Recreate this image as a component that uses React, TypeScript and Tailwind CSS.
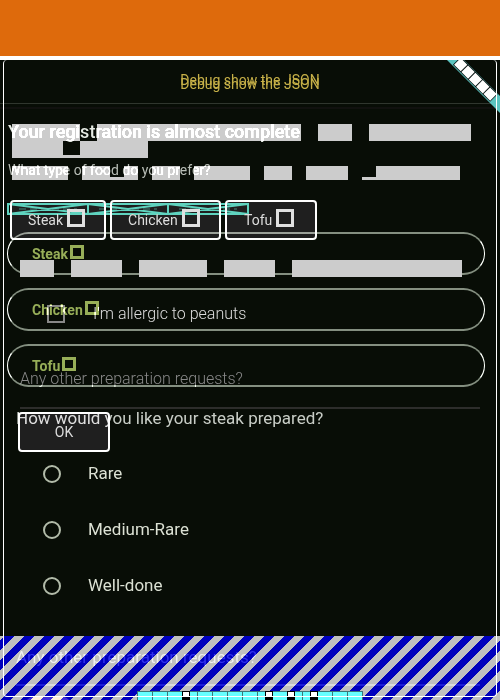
import React from "react";

const foods = ["Steak", "Chicken", "Tofu"];
const doneness = ["Rare", "Medium-Rare", "Well-done"];

function Block({ className }: { className: string }) {
  return <span className={`block h-full shrink-0 bg-[#ccc] ${className}`} />;
}

function BlockText() {
  return (
    <div aria-hidden="true" className="pointer-events-none absolute inset-x-0 top-[124px] overflow-hidden">
      <div className="flex h-[17px] gap-[17px] pl-3">
        <Block className="w-[68px]" />
        <Block className="w-[204px]" />
        <Block className="w-[34px]" />
        <Block className="w-[102px]" />
      </div>
      <div className="flex h-[17px] pl-3">
        <Block className="w-[51px]" />
        <span className="w-[17px] border-b-3 border-[#ccc]" />
        <Block className="w-[68px]" />
      </div>
      <div className="mt-2 flex h-3.5 gap-3.5 pl-3">
        <Block className="w-14" />
        <span className="flex">
          <Block className="w-7" />
          <span className="w-3.5 border-b-3 border-[#ccc]" />
          <Block className="w-3.5" />
        </span>
        <Block className="w-7" />
        <Block className="w-14" />
        <Block className="w-7" />
        <Block className="w-[42px]" />
        <span className="flex">
          <span className="w-3.5 border-b-3 border-[#ccc]" />
          <Block className="w-[84px]" />
        </span>
      </div>
    </div>
  );
}

function HintBlocks() {
  return (
    <div aria-hidden="true" className="pointer-events-none absolute inset-x-0 top-[260px] z-20 flex h-[17px] gap-[17px] overflow-hidden pl-5">
      <Block className="w-[34px]" />
      <Block className="w-[51px]" />
      <Block className="w-[68px]" />
      <Block className="w-[51px]" />
      <Block className="w-[170px]" />
    </div>
  );
}

function CrossedStrip() {
  return (
    <svg aria-hidden="true" width="242" height="12" viewBox="0 0 242 12" className="pointer-events-none absolute left-[7px] top-[203px] mix-blend-lighten" fill="none" stroke="#5fd3bf">
      <path d="M0 1H242M0 11H242" strokeWidth="2" />
      <path d="M1 0V12M81 0V12M161 0V12M241 0V12" strokeWidth="2" />
      <path d="M1 1L81 11M1 11L81 1M81 1L161 11M81 11L161 1M161 1L241 11M161 11L241 1" strokeWidth="2" />
      <path d="M12 6H70M92 6H150M172 6H230" strokeDasharray="7 4" strokeWidth="0.6" />
    </svg>
  );
}

function Ribbon() {
  return (
    <svg aria-hidden="true" width="54" height="54" viewBox="0 0 54 54" className="pointer-events-none absolute right-0 top-[60px]">
      <path d="M1 0H18L54 36V53Z" fill="#5cc4c0" />
      <g transform="translate(14.7 4.7) rotate(45)">
        <rect x="-5.5" y="-5.5" width="52.5" height="11" fill="#071211" />
        {[0, 10.4, 20.8, 31.2, 41.6].map((x) => (
          <rect key={x} x={x - 4.7} y="-4.7" width="9.4" height="9.4" fill="#fff" />
        ))}
      </g>
    </svg>
  );
}

function BottomStrip() {
  return (
    <svg aria-hidden="true" width="226" height="9" viewBox="0 0 226 9" className="pointer-events-none absolute bottom-0 left-1/2 z-10 -translate-x-[113px]">
      <rect width="226" height="9" fill="#66ffff" />
      <path d="M0 .5H226M.5 0V9M15.5 0V9M30.5 0V9M60.5 0V9M75.5 0V9M90.5 0V9M105.5 0V9M120.5 0V9M165.5 0V9M195.5 0V9M210.5 0V9M225.5 0V9" stroke="#3b7777" />
      {[46, 129, 151, 174].map((x) => (
        <g key={x}>
          <rect x={x - 1} width="8" height="9" fill="#000" />
          <rect x={x} y="1" width="6" height="4" fill="#fff" />
        </g>
      ))}
    </svg>
  );
}

function OrderForm() {
  return (
    <form className="absolute inset-x-0 top-[200px]" onSubmit={(e) => e.preventDefault()}>
      <div className="flex gap-1 pl-2.5">
        {foods.map((food) => (
          <label key={food} className="flex h-10 min-w-[92px] items-center justify-center gap-1 rounded-sm border-2 border-white bg-[#1f1f1f] pl-4 pr-[19px] text-sm text-[#ddd]">
            {food}
            <input type="checkbox" className="mb-1 size-[18px] appearance-none border-3 border-[#e0e0e0]" />
          </label>
        ))}
      </div>
      <label className="mt-[54px] ml-[47px] flex h-10 w-fit items-center gap-7 text-base font-light text-[#ddd]">
        <input type="checkbox" className="size-[18px] appearance-none border-2 border-[#888]" />
        I'm allergic to peanuts
      </label>
      <div className="mt-[15px] px-5">
        <input
          aria-label="Any other preparation requests?"
          placeholder="Any other preparation requests?"
          className="block h-[60px] w-full border-b-2 border-[#2d2d2b] bg-transparent text-base font-light outline-none placeholder:text-[#888]"
        />
      </div>
      <button className="mt-[3px] ml-[18px] block h-10 w-[92px] rounded-sm border-2 border-white bg-[#1f1f1f] text-sm text-[#ddd]">OK</button>
    </form>
  );
}

export default function App() {
  return (
    <div className="relative isolate flex min-h-screen flex-col overflow-hidden bg-[#080d06] font-[Roboto,sans-serif] text-[#e2e2dc]">
      <header className="h-[60px] border-b-4 border-white bg-[#de6a0c]" />
      <BlockText />
      <OrderForm />
      <CrossedStrip />

      <div className="relative flex h-11 items-center justify-center border-b border-[#30362e] text-sm text-[#c6b048]">
        <button className="pb-1">Debug show the JSON</button>
        <span aria-hidden="true" className="absolute inset-x-0 top-[14px] text-center">Debug show the JSON</span>
      </div>
      <div className="mt-[3px] h-0.5 bg-[#11110f]" />

      <main className="pointer-events-none relative flex grow flex-col mix-blend-plus-lighter">
        <h1 className="mt-[13px] ml-2 text-lg leading-5 font-medium text-[#ddd]">Your registration is almost complete</h1>
        <p className="mt-[18px] ml-2 text-sm leading-5 text-[#b0b0b0]">What type of food do you prefer?</p>

        <div className="mt-[52px] mr-[15px] ml-[7px] flex flex-col gap-[13px]">
          {foods.map((food) => (
            <label key={food} className="pointer-events-auto flex h-[43px] items-center gap-0.5 rounded-full border-x border-y-2 border-x-white border-y-[#7c827a] pl-6 text-sm font-bold text-[#8fa152]">
              {food}
              <input type="checkbox" className="mb-[3px] size-3.5 appearance-none border-3 border-[#8fa152]" />
            </label>
          ))}
        </div>

        <fieldset className="mt-[19px]">
          <legend className="ml-4 text-[17px] leading-6 text-[#c0c0c0]">How would you like your steak prepared?</legend>
          <div className="mt-4">
            {doneness.map((label) => (
              <label key={label} className="pointer-events-auto ml-[43px] flex h-14 w-fit items-center gap-[27px] text-[17px] text-[#d4d4ce]">
                <input type="radio" name="doneness" className="size-[18px] appearance-none rounded-full border-2 border-[#aaaea3]" />
                {label}
              </label>
            ))}
          </div>
        </fieldset>
      </main>

      <section className="relative h-16 overflow-hidden bg-[linear-gradient(135deg,#c0c0c0_25%,#0000bd_25%,#0000bd_50%,#c0c0c0_50%,#c0c0c0_75%,#0000bd_75%)] bg-[length:20px_20px] bg-[position:-5px_0px] pl-4 pr-5">
        <input
          aria-label="Any other preparation requests? (steak)"
          placeholder="Any other preparation requests?"
          className="block h-[50px] w-full border-b-2 border-[#1c1c1c] bg-transparent pb-1.5 text-[17px] mix-blend-plus-lighter outline-none placeholder:text-[#303030] placeholder:opacity-100"
        />
        <div aria-hidden="true" className="absolute -bottom-5 left-6 h-6 w-12 rounded-full bg-[#40301c] mix-blend-plus-lighter" />
      </section>

      <HintBlocks />
      <Ribbon />
      <BottomStrip />
      <div aria-hidden="true" className="pointer-events-none absolute inset-x-[3px] top-[60px] bottom-[3px] z-20 rounded-sm border-x border-b border-white" />
    </div>
  );
}
